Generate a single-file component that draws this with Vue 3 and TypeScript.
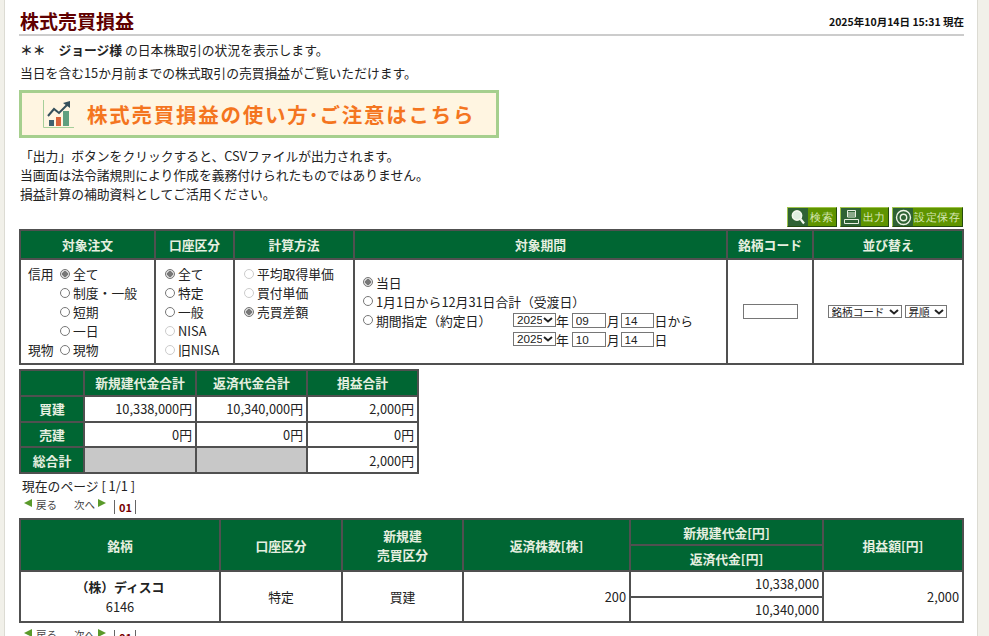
<template>
  <div class="page">
    <main class="main">
      <header class="head">
        <h1 class="head__title">株式売買損益</h1>
        <span class="head__date">2025年10月14日 15:31 現在</span>
      </header>

      <p class="intro"><b>＊＊　ジョージ様</b> の日本株取引の状況を表示します。</p>
      <p class="intro intro--second">当日を含む15か月前までの株式取引の売買損益がご覧いただけます。</p>

      <a class="banner">
        <svg class="banner__icon" width="31" height="28" viewBox="0 0 31 28">
          <path d="M0.5 0V27.5H31" fill="none" stroke="#a6cf9a" stroke-width="1" />
          <rect x="6" y="20" width="5" height="6" fill="#3f6170" />
          <rect x="13" y="17" width="5" height="9" fill="#d9623a" />
          <rect x="20" y="11" width="6" height="15" fill="#5f9f7f" />
          <path d="M5 16 L11 9 L16 13 L25 4" fill="none" stroke="#35505c" stroke-width="2" />
          <path d="M20 3 L27 1 L27 8 Z" fill="#35505c" />
        </svg>
        <span class="banner__text">株式売買損益の使い方<i>･</i>ご注意はこちら</span>
      </a>

      <div class="notes">
        <p>「出力」ボタンをクリックすると、CSVファイルが出力されます。</p>
        <p>当画面は法令諸規則により作成を義務付けられたものではありません。</p>
        <p>損益計算の補助資料としてご活用ください。</p>
      </div>

      <div class="tools">
        <button class="tool tool--search">
          <span class="tool__icon">
            <svg width="16" height="16" viewBox="0 0 16 16">
              <circle cx="7" cy="6.5" r="4.6" fill="#dfeee0" stroke="#f4f8ee" stroke-width="1.6" />
              <path d="M10.5 10 L14 14.5" stroke="#f4f8ee" stroke-width="2.2" />
            </svg>
          </span>
          <span class="tool__label">検索</span>
        </button>
        <button class="tool tool--print">
          <span class="tool__icon">
            <svg width="17" height="16" viewBox="0 0 17 16">
              <path d="M4.5 1.5H12.5V8H4.5Z M4.5 4H12.5 M4.5 6H12.5" fill="none" stroke="#e8efe0" />
              <path d="M1.5 10.5H15.5V14.5H1.5Z" fill="none" stroke="#e8efe0" />
            </svg>
          </span>
          <span class="tool__label">出力</span>
        </button>
        <button class="tool tool--save">
          <span class="tool__icon">
            <svg width="17" height="17" viewBox="0 0 17 17">
              <circle cx="8.5" cy="8.5" r="7" fill="none" stroke="#eef4e6" stroke-width="1.4" />
              <circle cx="8.5" cy="8.5" r="3.2" fill="none" stroke="#eef4e6" stroke-width="1.4" />
            </svg>
          </span>
          <span class="tool__label">設定保存</span>
        </button>
      </div>

      <table class="grid search">
        <colgroup>
          <col v-for="(w, i) in searchCols" :key="i" :style="{ width: w + 'px' }" />
        </colgroup>
        <thead>
          <tr class="search__head">
            <th>対象注文</th>
            <th>口座区分</th>
            <th>計算方法</th>
            <th>対象期間</th>
            <th>銘柄コード</th>
            <th>並び替え</th>
          </tr>
        </thead>
        <tbody>
          <tr class="search__body">
            <td>
              <div class="orders">
                <template v-for="o in orders" :key="o.text">
                  <span class="orders__group">{{ o.group }}</span>
                  <label class="radio"><input type="radio" name="order" :checked="o.checked" />{{ o.text }}</label>
                </template>
              </div>
            </td>
            <td>
              <div class="stack stack--account">
                <label v-for="a in accounts" :key="a.text" class="radio">
                  <input type="radio" name="account" :checked="a.checked" :disabled="a.off" />{{ a.text }}
                </label>
              </div>
            </td>
            <td class="top">
              <div class="stack stack--calc">
                <label v-for="c in calcs" :key="c.text" class="radio">
                  <input type="radio" name="calc" :checked="c.checked" :disabled="c.off" />{{ c.text }}
                </label>
              </div>
            </td>
            <td>
              <div class="period">
                <label class="radio period__full"><input type="radio" name="period" checked />当日</label>
                <label class="radio period__full"><input type="radio" name="period" />1月1日から12月31日合計（受渡日）</label>
                <label class="radio"><input type="radio" name="period" />期間指定（約定日）</label>
                <div class="period__date">
                  <select class="sel sel--year"><option>2025</option></select>年
                  <input class="num" value="09" />月
                  <input class="num num--day" value="14" />日から
                </div>
                <div class="period__date period__date--second">
                  <select class="sel sel--year"><option>2025</option></select>年
                  <input class="num" value="10" />月
                  <input class="num num--day" value="14" />日
                </div>
              </div>
            </td>
            <td><input class="code" /></td>
            <td>
              <div class="sorts">
                <select class="sel sel--sort"><option>銘柄コード</option></select>
                <select class="sel sel--order"><option>昇順</option></select>
              </div>
            </td>
          </tr>
        </tbody>
      </table>

      <table class="grid totals">
        <colgroup>
          <col v-for="(w, i) in totalCols" :key="i" :style="{ width: w + 'px' }" />
        </colgroup>
        <thead>
          <tr>
            <th></th>
            <th>新規建代金合計</th>
            <th>返済代金合計</th>
            <th>損益合計</th>
          </tr>
        </thead>
        <tbody>
          <tr v-for="r in totals" :key="r.name">
            <th>{{ r.name }}</th>
            <td v-for="(v, i) in r.values" :key="i" class="num-cell" :class="{ blank: !v }">{{ v }}</td>
          </tr>
        </tbody>
      </table>

      <p class="page-no">現在のページ [ 1/1 ]</p>
      <nav class="pager">
        <span class="tri tri--left"></span><span class="pager__link">戻る</span>
        <span class="pager__link pager__link--next">次へ</span><span class="tri tri--right"></span>
        <span class="pager__nums"><b>01</b></span>
      </nav>

      <table class="grid trades">
        <colgroup>
          <col v-for="(w, i) in tradeCols" :key="i" :style="{ width: w + 'px' }" />
        </colgroup>
        <thead>
          <tr>
            <th rowspan="2">銘柄</th>
            <th rowspan="2">口座区分</th>
            <th rowspan="2">新規建<br />売買区分</th>
            <th rowspan="2">返済株数[株]</th>
            <th>新規建代金[円]</th>
            <th rowspan="2">損益額[円]</th>
          </tr>
          <tr>
            <th>返済代金[円]</th>
          </tr>
        </thead>
        <tbody>
          <tr>
            <td rowspan="2" class="center stock"><b>（株）ディスコ</b><br />6146</td>
            <td rowspan="2" class="center">特定</td>
            <td rowspan="2" class="center">買建</td>
            <td rowspan="2" class="num-cell">200</td>
            <td class="num-cell">10,338,000</td>
            <td rowspan="2" class="num-cell">2,000</td>
          </tr>
          <tr>
            <td class="num-cell">10,340,000</td>
          </tr>
        </tbody>
      </table>

      <nav class="pager pager--bottom">
        <span class="tri tri--left"></span><span class="pager__link">戻る</span>
        <span class="pager__link pager__link--next">次へ</span><span class="tri tri--right"></span>
        <span class="pager__nums"><b>01</b></span>
      </nav>
    </main>
  </div>
</template>

<script setup lang="ts">
const searchCols = [135, 79, 120, 373, 86, 150]
const totalCols = [64, 112, 111, 111]
const tradeCols = [200, 122, 121, 167, 193, 140]

const orders = [
  { group: '信用', text: '全て', checked: true },
  { group: '', text: '制度・一般', checked: false },
  { group: '', text: '短期', checked: false },
  { group: '', text: '一日', checked: false },
  { group: '現物', text: '現物', checked: false },
]

const accounts = [
  { text: '全て', checked: true, off: false },
  { text: '特定', checked: false, off: false },
  { text: '一般', checked: false, off: false },
  { text: 'NISA', checked: false, off: true },
  { text: '旧NISA', checked: false, off: true },
]

const calcs = [
  { text: '平均取得単価', checked: false, off: true },
  { text: '買付単価', checked: false, off: true },
  { text: '売買差額', checked: true, off: false },
]

const totals = [
  { name: '買建', values: ['10,338,000円', '10,340,000円', '2,000円'] },
  { name: '売建', values: ['0円', '0円', '0円'] },
  { name: '総合計', values: ['', '', '2,000円'] },
]
</script>

<style>
html,
body {
  overflow: hidden;
  background: #f1f0e9;
}
</style>

<style scoped>
.page {
  width: 989px;
  height: 636px;
  overflow: hidden;
  background: #f1f0e9;
  font-family: "Noto Sans CJK JP", "Liberation Sans", sans-serif;
  font-size: 12.8px;
  color: #222;
}

.main {
  box-sizing: border-box;
  width: 974px;
  margin-left: 4px;
  height: 700px;
  padding: 0 13px 0 14px;
  background: #fff;
  border-left: 1px solid #dcdbd3;
  border-right: 1px solid #dcdbd3;
}

p {
  margin: 0;
}

.head {
  display: flex;
  justify-content: space-between;
  align-items: flex-end;
  height: 34px;
  border-bottom: 2px solid #ccc;
}

.head__title {
  margin: 0 0 0 1px;
  font-size: 19px;
  line-height: 27px;
  color: #600000;
}

.head__date {
  font-size: 10.5px;
  font-weight: 700;
  line-height: 24px;
  color: #111;
}

.intro {
  margin: 5px 0 0 1px;
  line-height: 18px;
}

.intro--second {
  margin-top: 5px;
}

.banner {
  display: flex;
  align-items: center;
  box-sizing: border-box;
  width: 480px;
  height: 48px;
  margin-top: 8px;
  padding-left: 21px;
  background: #fff5e1;
  border: 3px solid #a6cf8e;
}

.banner__icon {
  flex: none;
}

.banner__text {
  margin-left: 13px;
  font-size: 20.5px;
  font-weight: 700;
  letter-spacing: 1.75px;
  color: #f4751f;
  white-space: nowrap;
}

.banner__text i {
  margin: 0 -1px;
  font-style: normal;
}

.notes {
  margin: 8px 0 0 1px;
  line-height: 19px;
}

.tools {
  display: flex;
  justify-content: flex-end;
  gap: 3px;
  margin: 4px 1px 2px 0;
}

.tool {
  display: flex;
  align-items: stretch;
  box-sizing: border-box;
  height: 20px;
  padding: 0;
  background: #5f9400;
  border: 1px solid;
  border-color: #9fc44a #244a10 #244a10 #9fc44a;
}

.tool--search {
  width: 50px;
}

.tool--print {
  width: 49px;
}

.tool--save {
  width: 71px;
}

.tool__icon {
  display: flex;
  align-items: center;
  justify-content: center;
  width: 20px;
  flex: none;
  background: #2f6234;
}

.tool__label {
  flex: 1;
  font-family: inherit;
  font-size: 10.5px;
  line-height: 18px;
  letter-spacing: 0.6px;
  text-align: center;
  color: #d8e8b8;
  white-space: nowrap;
}

.grid {
  border-collapse: collapse;
  table-layout: fixed;
}

.grid th,
.grid td {
  padding: 0;
  border: 2px solid #505050;
}

.grid th {
  background: #063;
  color: #e6efe0;
  font-weight: 700;
  text-align: center;
}

.grid td {
  background: #fff;
}

.search {
  width: 943px;
}

.search__head {
  height: 29px;
}

.search__body {
  height: 105px;
}

.top {
  vertical-align: top;
}

.center {
  text-align: center;
}

.radio {
  display: flex;
  align-items: center;
  height: 19px;
  white-space: nowrap;
}

.radio input {
  flex: none;
  appearance: none;
  box-sizing: border-box;
  width: 10px;
  height: 10px;
  margin: 0 3px 0 0;
  background: #fff;
  border: 1px solid #777;
  border-radius: 50%;
}

.radio input:checked {
  background: radial-gradient(circle, #777 0 2.6px, #ddd 3px);
}

.radio input:disabled {
  border-color: #ccc;
}

.orders {
  display: grid;
  grid-template-columns: 32px auto;
  align-items: center;
  padding-left: 7px;
}

.stack--account {
  padding-left: 9px;
}

.stack--calc {
  padding: 4px 0 0 9px;
}

.period {
  display: grid;
  grid-template-columns: 150px auto;
  padding: 0 0 2px 8px;
}

.period__full {
  grid-column: 1 / 3;
}

.period__date {
  display: flex;
  align-items: center;
  height: 19px;
  white-space: nowrap;
}

.period__date--second {
  grid-column: 2;
}

.sel {
  box-sizing: border-box;
  appearance: none;
  height: 14px;
  padding: 0 13px 0 3px;
  background: #fff url("data:image/svg+xml,%3Csvg xmlns='http://www.w3.org/2000/svg' width='10' height='6'%3E%3Cpath d='M1 1l4 3.5L9 1' fill='none' stroke='%23222' stroke-width='2'/%3E%3C/svg%3E") no-repeat right 2px center;
  border: 1px solid #767676;
  border-radius: 0;
  font-family: inherit;
  line-height: 12px;
  color: #222;
}

.sel--year {
  width: 43px;
  font-family: "Liberation Sans", sans-serif;
  font-size: 11.7px;
}

.sorts {
  display: flex;
  justify-content: center;
  gap: 3px;
  padding-right: 2px;
}

.sel--sort {
  width: 74px;
  height: 13px;
  font-size: 10.6px;
}

.sel--order {
  width: 42px;
  height: 13px;
  font-size: 10.6px;
}

.num {
  box-sizing: border-box;
  width: 34px;
  height: 15px;
  margin: 0 1px 0 3px;
  padding: 0 3px;
  border: 1px solid #767676;
  border-radius: 0;
  font-family: "Liberation Sans", sans-serif;
  font-size: 11.7px;
  color: #222;
}

.num--day {
  width: 33px;
  margin: 0 1px 0 1px;
}

.code {
  display: block;
  box-sizing: border-box;
  width: 55px;
  height: 15px;
  margin: 0 auto 1px;
  padding: 0;
  border: 1px solid #767676;
  border-radius: 0;
}

.totals {
  width: 398px;
  margin-top: 4px;
}

.totals tr {
  height: 25.75px;
}

.num-cell {
  padding-right: 3px !important;
  text-align: right;
  color: #222;
}

.grid td.blank {
  background: #c8c8c8;
}

.page-no {
  margin: 3px 0 0 3px;
  line-height: 18px;
}

.pager {
  display: flex;
  align-items: center;
  height: 22px;
  padding-left: 5px;
  font-size: 10.5px;
  line-height: 14px;
  color: #444;
}

.pager__link {
  margin: -3px 0 0 4px;
}

.pager__link--next {
  margin-left: 17px;
  margin-right: 3px;
}

.tri {
  width: 0;
  height: 0;
  margin-top: -6px;
  border-top: 4px solid transparent;
  border-bottom: 4px solid transparent;
}

.tri--left {
  border-right: 8px solid #5a9a2a;
}

.tri--right {
  border-left: 8px solid #5a9a2a;
}

.pager__nums {
  margin: 2px 0 0 8px;
  padding: 0 3px 0 4px;
  border-left: 1px solid #666;
  border-right: 1px solid #666;
  color: #700;
  font-size: 11px;
}

.trades {
  width: 943px;
  margin-top: 1px;
}

.trades thead tr {
  height: 26px;
}

.trades tbody tr {
  height: 25.5px;
}

.stock {
  line-height: 20px;
}

.pager--bottom {
  margin-top: 2px;
}
</style>
